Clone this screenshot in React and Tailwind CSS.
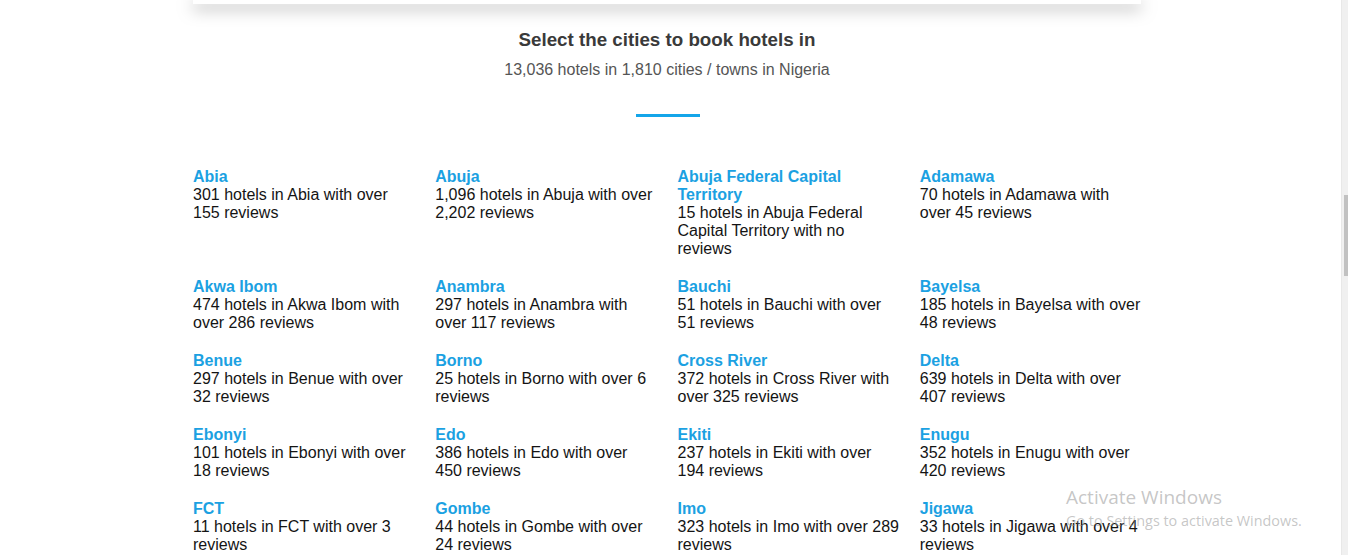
const cities = [
  ["Abia", "301 hotels in Abia with over 155 reviews"],
  ["Abuja", "1,096 hotels in Abuja with over 2,202 reviews"],
  ["Abuja Federal Capital Territory", "15 hotels in Abuja Federal Capital Territory with no reviews"],
  ["Adamawa", "70 hotels in Adamawa with over 45 reviews"],
  ["Akwa Ibom", "474 hotels in Akwa Ibom with over 286 reviews"],
  ["Anambra", "297 hotels in Anambra with over 117 reviews"],
  ["Bauchi", "51 hotels in Bauchi with over 51 reviews"],
  ["Bayelsa", "185 hotels in Bayelsa with over 48 reviews"],
  ["Benue", "297 hotels in Benue with over 32 reviews"],
  ["Borno", "25 hotels in Borno with over 6 reviews"],
  ["Cross River", "372 hotels in Cross River with over 325 reviews"],
  ["Delta", "639 hotels in Delta with over 407 reviews"],
  ["Ebonyi", "101 hotels in Ebonyi with over 18 reviews"],
  ["Edo", "386 hotels in Edo with over 450 reviews"],
  ["Ekiti", "237 hotels in Ekiti with over 194 reviews"],
  ["Enugu", "352 hotels in Enugu with over 420 reviews"],
  ["FCT", "11 hotels in FCT with over 3 reviews"],
  ["Gombe", "44 hotels in Gombe with over 24 reviews"],
  ["Imo", "323 hotels in Imo with over 289 reviews"],
  ["Jigawa", "33 hotels in Jigawa with over 4 reviews"],
  ["Kaduna", "612 hotels in Kaduna with over 310 reviews"],
  ["Kano", "402 hotels in Kano with over 288 reviews"],
  ["Katsina", "58 hotels in Katsina with over 21 reviews"],
  ["Kebbi", "29 hotels in Kebbi with over 9 reviews"],
];

function CityItem({ name, text }) {
  return (
    <div className="pr-[20px] mb-[20px]">
      <a href="#" className="block font-bold text-[#1ba1e2] text-[16px] leading-[18px]">
        {name}
      </a>
      <p className="text-[16px] leading-[18px] text-[#141414]">{text}</p>
    </div>
  );
}

export default function App() {
  return (
    <div className="relative flex h-[555px] overflow-hidden bg-white font-['Liberation_Sans',Arial,sans-serif]">
      <div className="flex-1 overflow-hidden">
        <div className="ml-[193px] w-[948px] h-[4px] bg-white shadow-[0_4px_16px_rgba(0,0,0,0.5)]" />

        <div className="ml-[193px] w-[948px] flex flex-col items-center">
          <h2 className="mt-[25px] text-[18.75px] leading-[22px] font-bold text-[#3a3a3a]">
            Select the cities to book hotels in
          </h2>
          <p className="mt-[10px] text-[16px] leading-[18px] text-[#555]">
            13,036 hotels in 1,810 cities / towns in Nigeria
          </p>
          <div className="mt-[35px] ml-[2px] w-[64px] h-[3px] bg-[#14a5e9]" />
        </div>

        <div className="ml-[193px] w-[969px] mt-[51px] grid grid-cols-4">
          {cities.map(([name, text]) => (
            <CityItem key={name} name={name} text={text} />
          ))}
        </div>
      </div>

      <div className="relative w-[7px] bg-[#f0f0f0] border-l border-[#e8e8e8]">
        <div className="absolute left-[2px] top-[195px] w-[4px] h-[81px] bg-[#c1c1c1]" />
      </div>

      <div className="absolute left-[1066px] top-[485px] pointer-events-none font-['Open_Sans','Noto_Sans',sans-serif] text-[rgba(150,150,150,0.55)]">
        <div className="text-[19px] leading-[24px]">Activate Windows</div>
        <div className="text-[14.4px] leading-[20px] mt-[2px]">Go to Settings to activate Windows.</div>
      </div>
    </div>
  );
}
